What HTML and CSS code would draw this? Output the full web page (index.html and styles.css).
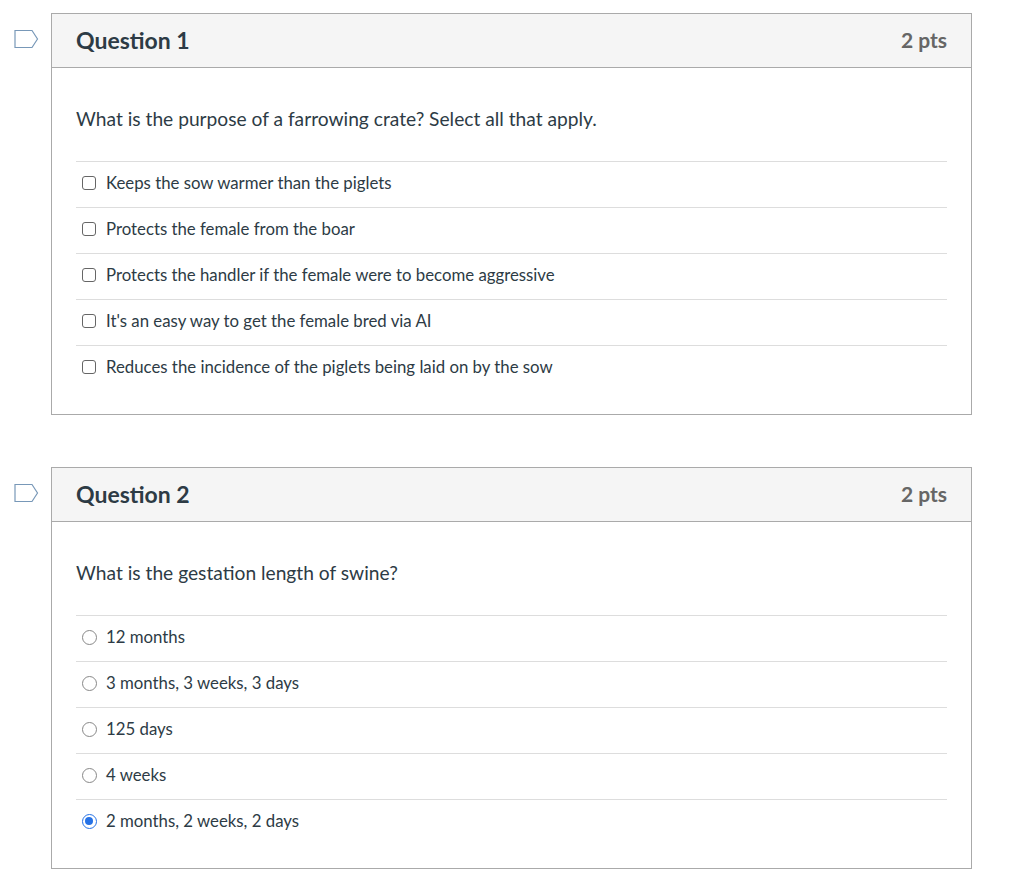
FILE: index.html
```html
<!DOCTYPE html>
<html>
<head>
<meta charset="utf-8">
<link rel="stylesheet" href="styles.css">
</head>
<body>
<div class="quiz">
  <div class="question">
    <div class="flag">
      <svg width="25" height="20" viewBox="0 0 25 20"><path d="M1 1.5 H18 L23.5 10 L18 18.5 H1 Z" fill="none" stroke="#7898b8" stroke-width="1.2"/></svg>
    </div>
    <div class="card">
      <div class="card-header">
        <span class="title">Question 1</span>
        <span class="pts">2 pts</span>
      </div>
      <div class="card-body">
        <div class="prompt">What is the purpose of a farrowing crate? Select all that apply.</div>
        <div class="answers">
          <div class="answer"><span class="box"></span><span>Keeps the sow warmer than the piglets</span></div>
          <div class="answer"><span class="box"></span><span>Protects the female from the boar</span></div>
          <div class="answer"><span class="box"></span><span>Protects the handler if the female were to become aggressive</span></div>
          <div class="answer"><span class="box"></span><span>It's an easy way to get the female bred via AI</span></div>
          <div class="answer"><span class="box"></span><span>Reduces the incidence of the piglets being laid on by the sow</span></div>
        </div>
      </div>
    </div>
  </div>
  <div class="question">
    <div class="flag">
      <svg width="25" height="20" viewBox="0 0 25 20"><path d="M1 1.5 H18 L23.5 10 L18 18.5 H1 Z" fill="none" stroke="#7898b8" stroke-width="1.2"/></svg>
    </div>
    <div class="card">
      <div class="card-header">
        <span class="title">Question 2</span>
        <span class="pts">2 pts</span>
      </div>
      <div class="card-body">
        <div class="prompt">What is the gestation length of swine?</div>
        <div class="answers">
          <div class="answer"><span class="radio"></span><span>12 months</span></div>
          <div class="answer"><span class="radio"></span><span>3 months, 3 weeks, 3 days</span></div>
          <div class="answer"><span class="radio"></span><span>125 days</span></div>
          <div class="answer"><span class="radio"></span><span>4 weeks</span></div>
          <div class="answer"><span class="radio checked"></span><span>2 months, 2 weeks, 2 days</span></div>
        </div>
      </div>
    </div>
  </div>
</div>
</body>
</html>
```
FILE: styles.css
```css
html, body {
  margin: 0;
  padding: 0;
  background: #fff;
}
body {
  font-family: Lato, "Open Sans", sans-serif;
  color: #2d3b45;
}
.quiz {
  padding: 13px 0 0 14px;
  width: 958px;
  display: flex;
  flex-direction: column;
  gap: 52px;
}
.question {
  display: flex;
  align-items: flex-start;
}
.flag {
  width: 37px;
  padding-top: 16px;
  line-height: 0;
}
.card {
  width: 919px;
  border: 1px solid #aaaaaa;
}
.card-header {
  height: 54px;
  background: #f5f5f5;
  border-bottom: 1px solid #aaaaaa;
  display: flex;
  align-items: center;
  justify-content: space-between;
  padding: 0 24px 2px;
  box-sizing: border-box;
}
.title {
  font-size: 23px;
  font-weight: bold;
  color: #2d3b45;
}
.pts {
  font-size: 21px;
  font-weight: bold;
  color: #666666;
}
.card-body {
  padding: 39px 24px 23px;
}
.prompt {
  font-size: 19.2px;
  line-height: 24px;
  margin-bottom: 30px;
}
.answers {
  border-top: 1px solid #dddddd;
}
.answer {
  height: 42px;
  border-bottom: 1px solid #dddddd;
  display: flex;
  align-items: center;
  padding-left: 6px;
  padding-bottom: 3px;
  box-sizing: content-box;
  font-size: 16.8px;
}
.answer:last-child {
  border-bottom: none;
}
.answer > span:last-child {
  line-height: 20px;
}
.box {
  width: 14px;
  height: 14px;
  border: 1px solid #666;
  border-radius: 3px;
  margin-right: 10px;
  box-sizing: border-box;
  flex: none;
}
.radio {
  width: 15px;
  height: 15px;
  border: 1px solid #888;
  border-radius: 50%;
  margin-right: 9px;
  position: relative;
  box-sizing: border-box;
  flex: none;
}
.radio.checked {
  border: 1.5px solid #2672e6;
}
.radio.checked::after {
  content: "";
  position: absolute;
  left: 2px;
  top: 2px;
  width: 8px;
  height: 8px;
  border-radius: 50%;
  background: #2672e6;
}
```
